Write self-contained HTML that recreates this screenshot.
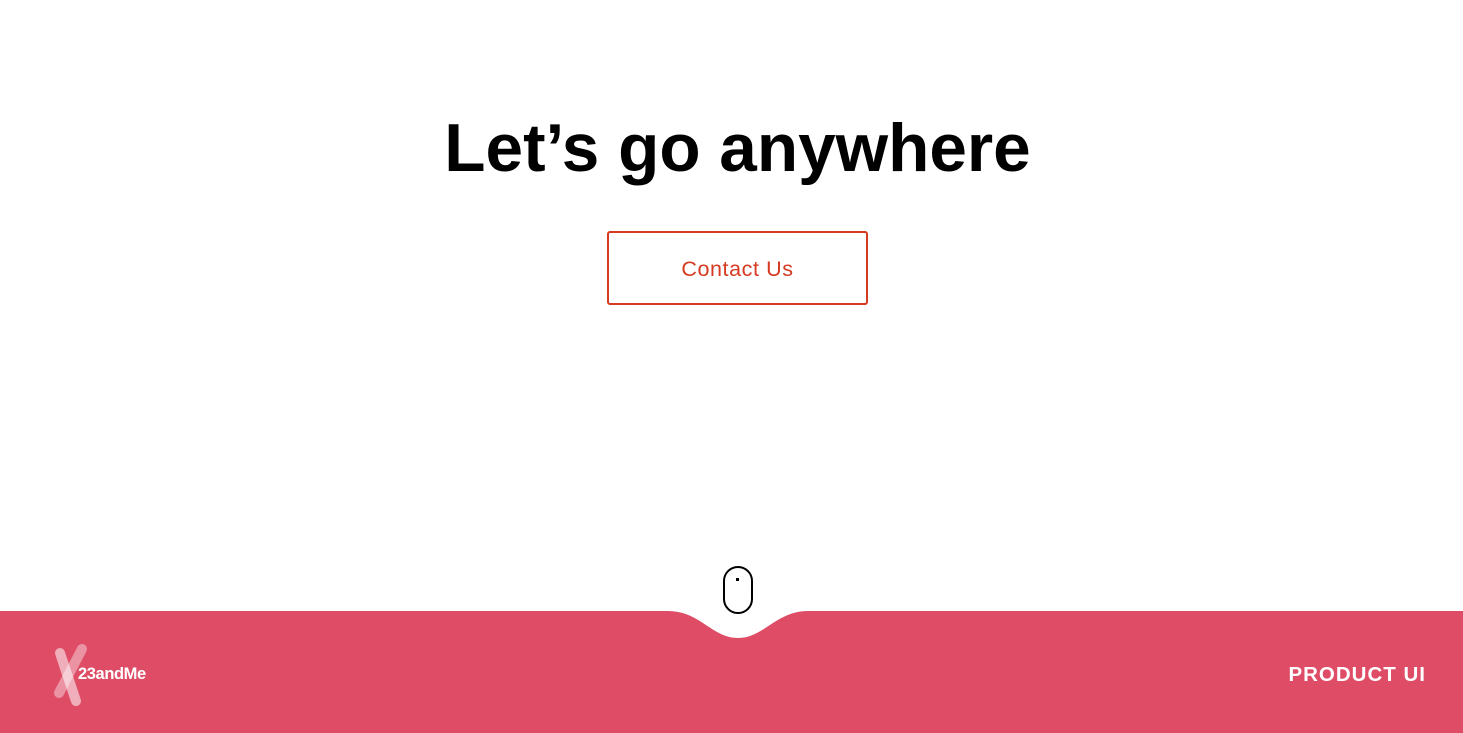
<!DOCTYPE html>
<html><head><meta charset="utf-8"><style>
html,body{margin:0;padding:0;width:1463px;height:733px;overflow:hidden;background:#fff;font-family:"Liberation Sans",Arial,sans-serif;position:relative}
h1{position:absolute;left:6px;width:1463px;top:109px;margin:0;text-align:center;font-size:67.5px;font-weight:bold;color:#000;letter-spacing:0;line-height:80px}
.btn{position:absolute;left:607px;top:231px;width:257px;height:70px;border:2px solid #d63a20;border-radius:3px;color:#d63a20;font-size:21.5px;text-align:center;line-height:72px;letter-spacing:0.6px}
.pu{position:absolute;right:37px;top:663px;color:#fff;font-weight:bold;font-size:20.5px;letter-spacing:1px}
.logo{position:absolute;left:78px;top:665px;color:#fff;font-weight:bold;font-size:16.5px;letter-spacing:-0.4px}
</style></head><body>
<h1>Let’s go anywhere</h1>
<div class="btn">Contact Us</div>
<svg width="1463" height="733" style="position:absolute;left:0;top:0">
<path d="M0 611 H668 C700 611 712 638 738 638 C764 638 776 611 808 611 H1463 V733 H0 Z" fill="#de4c66"/>
<rect x="724" y="567" width="28" height="46" rx="14" fill="none" stroke="#000" stroke-width="2"/>
<rect x="736" y="578" width="3" height="3" fill="#000"/>
<line x1="82" y1="649" x2="59" y2="693" stroke="#fff" stroke-opacity="0.4" stroke-width="10" stroke-linecap="round"/>
<line x1="60" y1="653" x2="76" y2="701" stroke="#fff" stroke-opacity="0.55" stroke-width="10" stroke-linecap="round"/>
</svg>
<div class="logo">23andMe</div>
<div class="pu">PRODUCT UI</div>
</body></html>
